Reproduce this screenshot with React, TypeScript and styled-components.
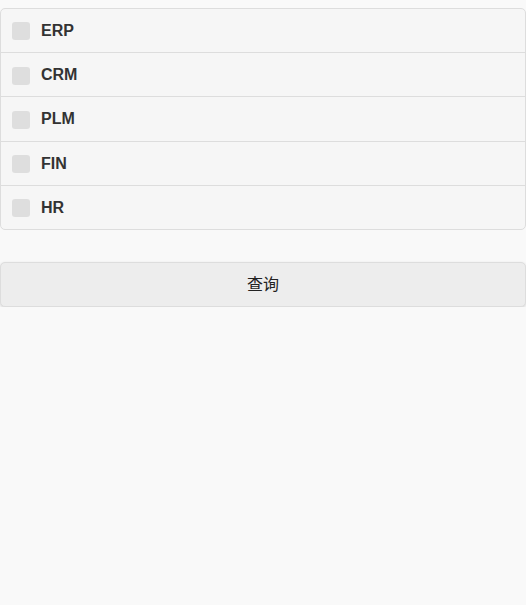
import React from "react";
import styled, { createGlobalStyle } from "styled-components";

const Global = createGlobalStyle`
  html, body { margin: 0; padding: 0; background: #f9f9f9; }
  body { padding-top: 8px; font-family: "Liberation Sans", Arial, "Noto Sans CJK SC", sans-serif; }
`;

const Group = styled.fieldset`
  margin: 0;
  padding: 0;
  border: 1px solid #dddddd;
  border-radius: 5px;
  background: #f6f6f6;
  overflow: hidden;
  min-width: 0;
`;

const Row = styled.label<{ $first?: boolean }>`
  display: flex;
  align-items: center;
  gap: 11px;
  padding: 12px 12px 10.4px 11px;
  line-height: 1.3;
  font-size: 16px;
  font-weight: 700;
  color: #333333;
  border-top: ${(p) => (p.$first ? "none" : "1px solid #dddddd")};
  cursor: pointer;
`;

const Box = styled.span`
  width: 18px;
  height: 18px;
  border-radius: 3px;
  background: #dedede;
  flex: none;
`;

const Button = styled.button`
  display: block;
  width: 100%;
  margin-top: 32px;
  padding: 11.7px 16px 10.7px;
  line-height: 1.3;
  font-size: 16px;
  font-weight: 400;
  font-family: "Liberation Sans", Arial, "Noto Sans CJK SC", sans-serif;
  color: #222222;
  background: #ededed;
  border: 1px solid #dddddd;
  border-radius: 5px;
  box-shadow: 0 1px 3px rgba(0, 0, 0, 0.15);
  text-align: center;
`;

const items = ["ERP", "CRM", "PLM", "FIN", "HR"];

export default function App() {
  return (
    <>
      <Global />
      <Group>
        {items.map((it, i) => (
          <Row key={it} $first={i === 0}>
            <Box />
            {it}
          </Row>
        ))}
      </Group>
      <Button>查询</Button>
    </>
  );
}
